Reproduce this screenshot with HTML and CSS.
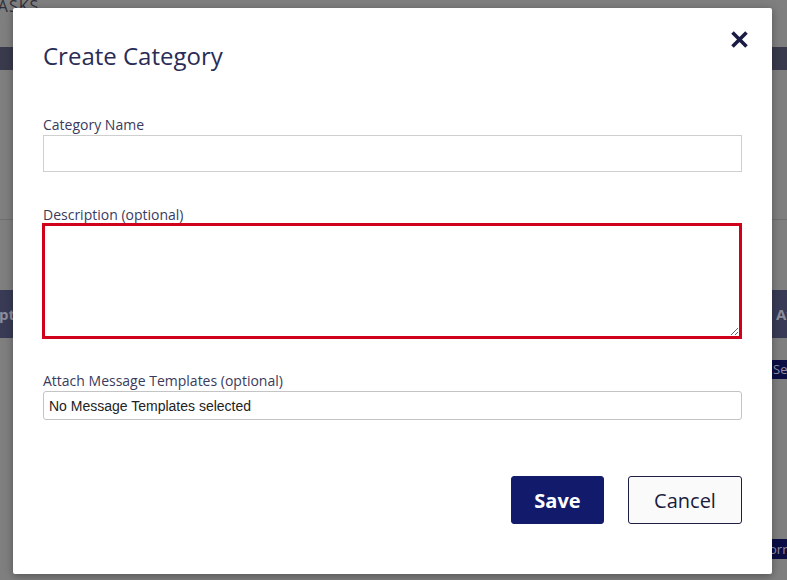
FILE: index.html
```html
<!DOCTYPE html>
<html>
<head>
<meta charset="utf-8">
<link rel="stylesheet" href="styles.css">
</head>
<body>
<div class="page">
  <div class="page-title">TASKS</div>
  <div class="page-bar"></div>
  <div class="page-rule"></div>
  <div class="page-table-head"><span class="th-left">pt</span><span class="th-right">Av</span></div>
  <div class="page-row"><span class="page-btn">Se</span></div>
  <div class="page-row bottom"><span class="page-btn">orr</span></div>
</div>

<div class="modal">
  <div class="modal-head">
    <h1 class="modal-title">Create Category</h1>
    <button class="close" aria-label="Close">
      <svg width="19" height="19" viewBox="0 0 19 19"><path d="M2.5 2.5 L16.5 16.5 M16.5 2.5 L2.5 16.5" stroke="#1b1c44" stroke-width="3.6" stroke-linecap="butt"/></svg>
    </button>
  </div>
  <div class="field">
    <label class="label">Category Name</label>
    <input class="input" type="text">
  </div>
  <div class="field desc">
    <label class="label">Description (optional)</label>
    <textarea class="textarea"></textarea>
  </div>
  <div class="field templates">
    <label class="label">Attach Message Templates (optional)</label>
    <div class="select">No Message Templates selected</div>
  </div>
  <div class="actions">
    <button class="btn save">Save</button>
    <button class="btn cancel">Cancel</button>
  </div>
</div>
</body>
</html>
```

FILE: styles.css
```css
html, body {
  margin: 0;
  padding: 0;
}
body {
  width: 787px;
  height: 580px;
  overflow: hidden;
  background: #7f7f7f;
  font-family: "Open Sans", "Liberation Sans", sans-serif;
  position: relative;
}
.page {
  display: flex;
  flex-direction: column;
}
.page-title {
  height: 12px;
  font-size: 16px;
  line-height: 12px;
  color: #2f2f3a;
  text-indent: -12px;
  overflow: hidden;
  letter-spacing: 1px;
}
.page-bar {
  margin-top: 35px;
  height: 23px;
  background: #393a4c;
}
.page-rule {
  margin-top: 149px;
  height: 1px;
  background: #6f6f72;
}
.page-table-head {
  margin-top: 70px;
  height: 48px;
  background: #393b56;
  display: flex;
  justify-content: space-between;
  align-items: center;
  font-weight: 700;
  font-size: 15px;
  color: #8d8e9c;
  overflow: hidden;
}
.th-left {
  margin-left: -1px;
}
.th-right {
  margin-right: -8px;
}
.page-row {
  margin-top: 22px;
  display: flex;
  justify-content: flex-end;
}
.page-row.bottom {
  margin-top: 160px;
}
.page-btn {
  display: block;
  width: 14px;
  height: 19px;
  background: #0b0d44;
  color: #8f90a8;
  font-size: 13px;
  line-height: 19px;
  padding-left: 2px;
  overflow: hidden;
  white-space: nowrap;
}
.page-row.bottom .page-btn {
  height: 20px;
  line-height: 20px;
  padding-left: 0;
  width: 15px;
  text-indent: -3px;
}

.modal {
  position: absolute;
  left: 13px;
  top: 8px;
  width: 759px;
  height: 566px;
  box-sizing: border-box;
  background: #fff;
  border-radius: 2px;
  box-shadow: 0 2px 8px rgba(0, 0, 0, 0.35);
  padding: 0 30px;
  display: flex;
  flex-direction: column;
}
.modal-head {
  display: flex;
  justify-content: space-between;
  align-items: flex-start;
  height: 108px;
}
.modal-title {
  margin: 32px 0 0;
  font-size: 24px;
  font-weight: 400;
  line-height: 32px;
  color: #2a2c55;
}
.close {
  margin: 22px -7px 0 0;
  border: 0;
  padding: 0;
  background: none;
  width: 19px;
  height: 19px;
  display: flex;
}
.field {
  display: flex;
  flex-direction: column;
}
.label {
  font-size: 14px;
  line-height: 17px;
  color: #3a3b5c;
  margin-bottom: 2px;
}
.input {
  height: 37px;
  box-sizing: border-box;
  border: 1px solid #cfcfcf;
  margin: 0;
  padding: 0 6px;
  border-radius: 0;
  outline: none;
}
.field.desc {
  margin-top: 34px;
}
.field.desc .label {
  margin-bottom: 0;
}
.textarea {
  height: 116px;
  box-sizing: border-box;
  border: 3px solid #d0021b;
  margin: 0 0 0 -1px;
  padding: 4px;
  resize: both;
  font-family: "Liberation Sans", sans-serif;
  outline: none;
}
.field.templates {
  margin-top: 33px;
}
.field.templates .label {
  margin-bottom: 2px;
}
.select {
  height: 29px;
  box-sizing: border-box;
  border: 1px solid #c4c4c4;
  border-radius: 3px;
  padding: 0 5px;
  font-family: "Liberation Sans", Arial, sans-serif;
  font-size: 14px;
  line-height: 28px;
  color: #222;
}
.actions {
  margin-top: 56px;
  display: flex;
  justify-content: flex-end;
  gap: 24px;
}
.btn {
  height: 48px;
  box-sizing: border-box;
  border-radius: 3px;
  font-family: "Open Sans", sans-serif;
  font-size: 20px;
  padding: 0;
  cursor: pointer;
}
.save {
  width: 93px;
  background: #111a6b;
  border: 1px solid #111a6b;
  color: #fff;
  font-weight: 700;
}
.cancel {
  width: 114px;
  background: #fafafa;
  border: 1px solid #1d1f44;
  color: #1b1c3c;
  font-weight: 500;
}
```
